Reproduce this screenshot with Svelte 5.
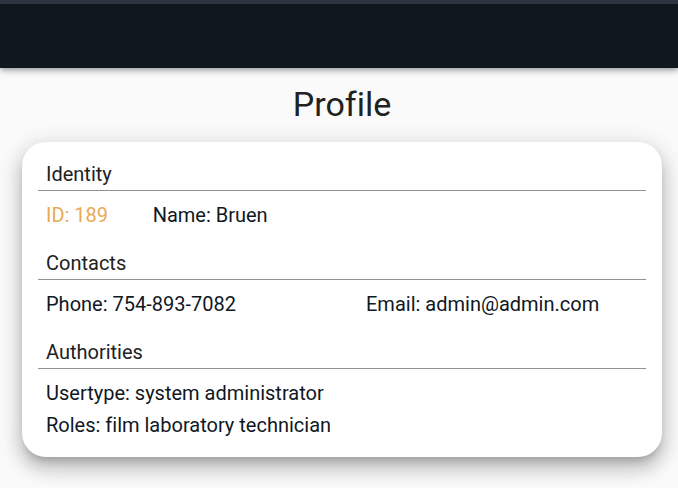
<script>
  const sections = [
    { title: 'Identity', kind: 'identity', fields: [
      { text: 'ID: 189', accent: true },
      { text: 'Name: Bruen' }
    ] },
    { title: 'Contacts', kind: 'contacts', fields: [
      { text: 'Phone: 754-893-7082' },
      { text: 'Email: admin@admin.com' }
    ] },
    { title: 'Authorities', kind: 'authorities', fields: [
      { text: 'Usertype: system administrator' },
      { text: 'Roles: film laboratory technician' }
    ] }
  ];
</script>

<header class="toolbar"></header>
<main>
  <h1>Profile</h1>
  <article class="card">
    {#each sections as section}
      <section>
        <h2>{section.title}</h2>
        <div class="fields {section.kind}">
          {#each section.fields as field}
            <p class:accent={field.accent}>{field.text}</p>
          {/each}
        </div>
      </section>
    {/each}
  </article>
</main>

<style>
  :global(html) {
    background: #fafafa;
  }
  :global(body) {
    margin: 0;
    color: #212121;
    font-family: Roboto, sans-serif;
    font-size: 20px;
    font-variant-ligatures: none;
  }
  .toolbar {
    box-sizing: border-box;
    height: 68px;
    border-top: 4px solid #2e3440;
    background: #10181f;
    box-shadow: 0 2px 4px -1px rgba(0, 0, 0, 0.2), 0 4px 5px rgba(0, 0, 0, 0.14), 0 1px 10px rgba(0, 0, 0, 0.12);
  }
  main {
    padding: 12px 16px 30px 22px;
  }
  h1 {
    margin: 0 0 14px;
    font-size: 34px;
    font-weight: 400;
    line-height: 48px;
    text-align: center;
  }
  .card {
    padding: 16px;
    border-radius: 24px;
    background: #fff;
    box-shadow: 0 7px 8px -4px rgba(0, 0, 0, 0.2), 0 12px 17px 2px rgba(0, 0, 0, 0.14), 0 5px 22px 4px rgba(0, 0, 0, 0.12);
  }
  section + section {
    margin-top: 16px;
  }
  h2 {
    margin: 0;
    padding: 0 8px;
    border-bottom: 1px solid #8f9194;
    font-size: 20px;
    font-weight: 400;
    line-height: 32px;
  }
  .fields {
    display: grid;
    grid-template-columns: repeat(6, minmax(0, 1fr));
    column-gap: 32px;
    padding-top: 8px;
  }
  p {
    grid-column: span 3;
    margin: 0;
    padding-left: 8px;
    line-height: 32px;
    color: #10181f;
  }
  .identity p {
    grid-column: span 5;
  }
  .identity p.accent {
    grid-column: span 1;
    color: #e9aa55;
  }
  .authorities p {
    grid-column: 1 / -1;
  }
</style>
